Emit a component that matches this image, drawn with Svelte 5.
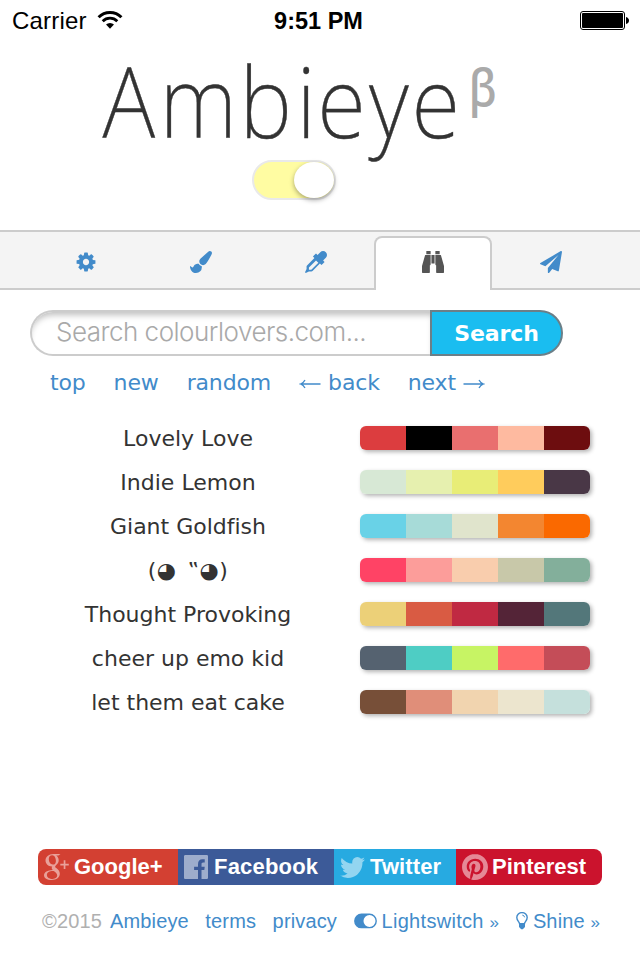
<script>
  const tabs = [
    { id: 'settings', w: 116, d: 'M1152 896q0-106-75-181t-181-75-181 75-75 181 75 181 181 75 181-75 75-181zm512-109v222q0 12-8 23t-20 13l-185 28q-19 54-39 91 35 50 107 138 10 12 10 25t-9 23q-27 37-99 108t-94 71q-12 0-26-9l-138-108q-44 23-91 38-16 136-29 186-7 28-36 28h-222q-14 0-24.5-8.5t-11.5-21.5l-28-184q-49-16-90-37l-141 107q-10 9-25 9-14 0-25-11-126-114-165-168-7-10-7-23 0-12 8-23 15-21 51-66.5t54-70.5q-27-50-41-99l-183-27q-13-2-21-12.5t-8-23.5v-222q0-12 8-23t19-13l186-28q14-46 39-92-40-57-107-138-10-12-10-24 0-10 9-23 26-36 98.5-107.5t94.5-71.5q13 0 26 10l138 107q44-23 91-38 16-136 29-186 7-28 36-28h222q14 0 24.5 8.5t11.5 21.5l28 184q49 16 90 37l142-107q9-9 24-9 13 0 25 10 129 119 165 170 7 8 7 22 0 12-8 23-15 21-51 66.5t-54 70.5q26 50 41 98l183 28q13 2 21 12.5t8 23.5z' },
    { id: 'brush', w: 113, d: 'M1615 0q70 0 122.5 46.5t52.5 116.5q0 63-45 151-332 629-465 752-97 91-218 91-126 0-216.5-92.5t-90.5-219.5q0-128 92-212l638-579q59-54 130-54zm-909 1034q39 76 106.5 130t150.5 76l1 71q4 213-129.5 347t-348.5 134q-123 0-218-46.5t-152.5-127.5-86.5-183-29-220q7 5 41 30t62 44.5 59 36.5 46 17q41 0 55-37 25-66 57.5-112.5t69.5-76 88-47.5 103-25.5 125-10.5z' },
    { id: 'picker', w: 117, d: 'M1698 94q94 94 94 226.5t-94 225.5l-225 223 104 104q10 10 10 23t-10 23l-210 210q-10 10-23 10t-23-10l-105-105-603 603q-37 37-90 37h-203l-256 128-64-64 128-256v-203q0-53 37-90l603-603-105-105q-10-10-10-23t10-23l210-210q10-10 23-10t23 10l104 104 223-225q93-94 225.5-94t226.5 94zm-1186 1442l576-576-192-192-576 576v192h192z' },
    { id: 'find', w: 118, active: true, d: 'M704 320v768q0 26-19 45t-45 19v576q0 26-19 45t-45 19h-512q-26 0-45-19t-19-45v-512l249-873q7-23 31-23h424zm320 0v704h-256v-704h256zm768 896v512q0 26-19 45t-45 19h-512q-26 0-45-19t-19-45v-576q-26 0-45-19t-19-45v-768h424q24 0 31 23zm-1088-1184v224h-352v-224q0-14 9-23t23-9h288q14 0 23 9t9 23zm736 0v224h-352v-224q0-14 9-23t23-9h288q14 0 23 9t9 23z' },
    { id: 'send', w: 118, d: 'M1764 11q33 24 27 64l-256 1536q-5 29-32 45-14 8-31 8-11 0-24-5l-453-185-242 295q-18 23-49 23-13 0-22-4-19-7-30.5-23.5t-11.5-36.5v-349l864-1059-1069 925-395-162q-37-14-40-55-2-40 32-59l1664-960q15-9 32-9 20 0 36 11z' },
  ];

  const palettes = [
    ['Lovely Love', ['#dc3d3f', '#000000', '#e96f6f', '#febaa0', '#6d0d0f']],
    ['Indie Lemon', ['#d7e8d5', '#e6f0af', '#e8ed77', '#ffcc5c', '#493746']],
    ['Giant Goldfish', ['#69d2e7', '#a7dbd8', '#e0e4cc', '#f38630', '#fa6900']],
    ['(◕ ‟◕)', ['#ff4365', '#fc9d9a', '#f9cdad', '#c8c8a9', '#83af9b']],
    ['Thought Provoking', ['#ecd078', '#d95b43', '#c02942', '#542437', '#53777a']],
    ['cheer up emo kid', ['#556270', '#4ecdc4', '#c7f464', '#ff6b6b', '#c44d58']],
    ['let them eat cake', ['#774f38', '#e08e79', '#f1d4af', '#ece5ce', '#c5e0dc']],
  ];

  // The wordmark is condensed horizontally; letter origins are given in page units.
  const squeeze = 0.92;
  const letterX = [102.5, 159.5, 239.5, 296.5, 317.3, 369, 411.5].map((x) => x / squeeze).join(' ');
</script>

<main>
  <div class="status">
    <div class="carrier">
      <span>Carrier</span>
      <svg width="26" height="20" viewBox="0 0 26 20" fill="none" stroke="#000">
        <path d="M1.6 7.2a16.1 16.1 0 0 1 22.8 0" stroke-width="3" />
        <path d="M5.7 11.2a10.4 10.4 0 0 1 14.6 0" stroke-width="2.8" />
        <path d="M9 14.6a5.7 5.7 0 0 1 8 0L13 18.8z" fill="#000" stroke="none" />
      </svg>
    </div>
    <b class="clock">9:51 PM</b>
    <svg class="battery" width="50" height="20" viewBox="0 0 50 20">
      <rect x="0.5" y="0.5" width="44" height="18" rx="2.5" fill="#fff" stroke="#000" />
      <rect x="2" y="2" width="41" height="15" rx="1" />
      <path d="M46 6q3 1 3 3.500t-3 3.500z" />
    </svg>
  </div>

  <header>
    <svg class="logo" width="420" height="110" viewBox="90 50 420 110">
      <text class="word" transform="scale({squeeze} 1)" x={letterX} y="138">Ambieye</text>
      <text class="beta" transform="scale({squeeze} 1)" x={468.5 / squeeze} y="106">β</text>
    </svg>
    <div class="switch"><i></i></div>
  </header>

  <nav>
    {#each tabs as t (t.id)}
      <a class="tab" class:active={t.active} style="width:{t.w}px">
        <svg width="22" height="22" viewBox="0 0 1792 1792"><path d={t.d} /></svg>
      </a>
    {/each}
  </nav>

  <form>
    <div class="field"><span>Search colourlovers.com...</span></div>
    <div class="go">Search</div>
  </form>

  <div class="links">
    <a>top</a><a>new</a><a>random</a>
    <a><svg width="22" height="12" viewBox="0 0 22 12"><path d="M21.500 6H1.500M6 2Q4.500 5 1.500 6 4.500 7 6 10" /></svg>back</a>
    <a>next<svg width="22" height="12" viewBox="0 0 22 12"><path d="M.5 6h20M16 2Q17.500 5 20.500 6 17.500 7 16 10" /></svg></a>
  </div>

  <section>
    {#each palettes as [name, colors], n}
      <div class="row">
        <span class="name" class:face={n === 3}>{name}</span>
        <div class="swatches">
          {#each colors as c}<i style="background:{c}"></i>{/each}
        </div>
      </div>
    {/each}
  </section>

  <div class="social">
    <a class="gp">
      <svg width="28" height="30" viewBox="0 0 28 30">
        <path fill-rule="evenodd" d="M17.500 2h-7C5.500 2 2.500 5 2.500 8.600c0 3.600 3 6 6.700 5.800-.9 1.500-.4 2.500.6 3.500C4.500 18 1 20 1 23.200 1 26 4 28 8.500 28c5.200 0 8.300-2.800 8.300-6.200 0-2.600-1.500-4.200-3.500-5.700-1.500-1.200-1.600-1.900-.1-3.200 1.500-1.300 2.500-2.600 2.500-4.700 0-2.300-1.100-3.800-2.500-4.800h2.200zM9.200 3.200c2.400 0 3.700 3.100 3.700 5.700 0 2.200-1.100 3.700-3 3.700-2.600 0-4.100-2.900-4.100-5.500 0-2.200 1.200-3.900 3.400-3.900zm1.400 15.900c2.400 1.600 3.600 2.600 3.600 4.500 0 1.900-1.600 3.300-4.500 3.300-3.400 0-5.800-1.600-5.800-4 0-2.600 3-4 6.700-3.800z" />
        <path d="M20.700 8.200h1.700v3.500h3.400v1.700h-3.400v3.500h-1.700v-3.500h-3.400v-1.700h3.400z" />
      </svg><span>Google+</span>
    </a>
    <a class="fb">
      <svg width="24" height="24" viewBox="0 0 24 24"><path d="M22.676 0H1.324C.593 0 0 .593 0 1.324v21.352C0 23.408.593 24 1.324 24h12.694v-8.900H10.100v-3.300h3.918V9.200c0-3.100 1.700-4.900 4.300-4.900h2.400v3.300h-1.500c-1.400 0-1.700.7-1.700 1.800v2.400h3.200l-.4 3.300h-2.800V24h5.158c.733 0 1.325-.592 1.325-1.324V1.324C24 .593 23.408 0 22.676 0" /></svg><span>Facebook</span>
    </a>
    <a class="tw">
      <svg width="25" height="21" viewBox="108 256 1576 1280" preserveAspectRatio="none"><path d="M1684 408q-67 98-162 167 1 14 1 42 0 130-38 259.500t-115.500 248.500-184.500 210.500-258 146-323 54.500q-271 0-496-145 35 4 78 4 225 0 401-138-105-2-188-64.500t-114-159.500q33 5 61 5 43 0 85-11-112-23-185.500-111.500t-73.500-205.500v-4q68 38 146 41-66-44-105-115t-39-154q0-88 44-163 121 149 294.500 238.500t371.500 99.500q-8-38-8-74 0-134 94.500-228.500t228.500-94.500q140 0 236 102 109-21 205-78-37 115-142 178 93-10 186-50z" /></svg><span>Twitter</span>
    </a>
    <a class="pi">
      <svg width="26" height="26" viewBox="0 0 24 24"><path d="M12.017 0C5.396 0 .029 5.367.029 11.987c0 5.079 3.158 9.417 7.618 11.162-.105-.949-.199-2.403.041-3.439.219-.937 1.406-5.957 1.406-5.957s-.359-.72-.359-1.781c0-1.663.967-2.911 2.168-2.911 1.024 0 1.518.769 1.518 1.688 0 1.029-.653 2.567-.992 3.992-.285 1.193.6 2.165 1.775 2.165 2.128 0 3.768-2.245 3.768-5.487 0-2.861-2.063-4.869-5.008-4.869-3.410 0-5.409 2.562-5.409 5.199 0 1.033.394 2.143.889 2.741.099.12.112.225.085.345-.09.375-.293 1.199-.334 1.363-.053.225-.172.271-.401.165-1.495-.69-2.433-2.878-2.433-4.646 0-3.776 2.748-7.252 7.920-7.252 4.158 0 7.392 2.967 7.392 6.923 0 4.135-2.607 7.462-6.233 7.462-1.214 0-2.354-.629-2.758-1.379l-.749 2.848c-.269 1.045-1.004 2.352-1.498 3.146 1.123.345 2.306.535 3.550.535 6.607 0 11.985-5.365 11.985-11.987C23.970 5.390 18.592.026 11.985.026L12.017 0z" /></svg><span>Pinterest</span>
    </a>
  </div>

  <footer>
    <span class="copy">©2015</span>
    <a>Ambieye</a><a>terms</a><a>privacy</a>
    <a class="light"><svg width="23" height="16" viewBox="0 0 23 16"><path fill-rule="evenodd" d="M7.500.5h8a7.400 7.400 0 0 1 0 14.800h-8a7.400 7.400 0 0 1 0-14.800zm8 1.400a6 6 0 1 0 0 12 6 6 0 0 0 0-12z" /></svg><span>Lightswitch <small>»</small></span></a>
    <a class="shine"><svg width="12" height="18" viewBox="0 0 12 18"><path d="M3.600 11.800C3.300 9.500.8 8.800.8 5.600a5.200 5 0 0 1 10.400 0c0 3.200-2.500 3.900-2.800 6.200z" fill="none" stroke="#428bca" stroke-width="1.400" /><path d="M3 11.500h6v3.600L7.500 16.400Q6 18.200 4.500 16.400L3 15.100z" /><path d="M6.300 3.100q2 .2 2.300 2.200" fill="none" stroke="#428bca" /></svg><span>Shine <small>»</small></span></a>
  </footer>
</main>

<style>
  :global(body) { background: #fff; }
  main { width: 640px; height: 960px; overflow: hidden; background: #fff; color: #333; font-family: "Liberation Sans", Arial, sans-serif; display: flex; flex-direction: column; }
  svg { display: block; flex: none; }
  a { color: #428bca; text-decoration: none; white-space: nowrap; }
  svg path { fill: currentColor; }
  svg path[fill="none"] { fill: none; }

  .status { height: 40px; flex: none; box-sizing: border-box; display: grid; grid-template-columns: 1fr auto 1fr; align-items: center; padding: 2px 10px 0 12px; color: #000; }
  .carrier { display: flex; align-items: center; gap: 10px; font-size: 24px; letter-spacing: .2px; }
  .carrier svg { margin-top: -2px; }
  .carrier svg path[stroke-width] { fill: none; }
  .clock { font-size: 23.500px; margin-right: 5px; }
  .battery { justify-self: end; }

  header { height: 190px; flex: none; display: flex; flex-direction: column; align-items: flex-start; padding: 10px 0 0 90px; box-sizing: border-box; }
  .logo { overflow: visible; }
  .word { font: 200 97px "Noto Sans", "Open Sans", sans-serif; fill: #333; stroke: #333; stroke-width: .4px; }
  .beta { font: 500 50px "Noto Sans", sans-serif; fill: #aaa; }
  .switch { width: 84px; height: 40px; margin-left: 162px; box-sizing: border-box; border: 2px solid #e9e9e9; border-radius: 20px; background: #fffca2; display: flex; justify-content: flex-end; }
  .switch i { width: 40px; height: 36px; border-radius: 50%; background: #fff; box-shadow: 0 2px 5px rgba(0,0,0,.35); }

  nav { height: 60px; flex: none; box-sizing: border-box; border-top: 2px solid #ccc; box-shadow: inset 0 -2px #ccc; background: #f4f4f4; display: flex; align-items: flex-end; padding-left: 28px; }
  .tab { height: 54px; box-sizing: border-box; display: flex; justify-content: center; align-items: center; }
  .tab.active { background: #fff; color: #555; border: 2px solid #ccc; border-bottom: 0; border-radius: 8px 8px 0 0; }
  .tab:not(.active) { border-top: 2px solid transparent; }
  .tab svg { margin-bottom: 4px; }

  form { display: flex; margin: 20px 0 0 30px; height: 46px; flex: none; }
  .field { width: 400px; box-sizing: border-box; border: 2px solid #ccc; border-right: 0; border-radius: 23px 0 0 23px; box-shadow: inset 0 6px 6px -3px rgba(0,0,0,.25); padding: 0 0 4px 24px; display: flex; align-items: center; color: #a9a9a9; font: 300 26px Inter, sans-serif; letter-spacing: -.5px; white-space: nowrap; }
  .go { width: 133px; box-sizing: border-box; border: 2px solid #6b7f88; border-radius: 0 23px 23px 0; background: #1abdf0; color: #fff; font: bold 22px "DejaVu Sans", Verdana, sans-serif; letter-spacing: -.1px; display: flex; align-items: center; justify-content: center; }

  .links { height: 52px; flex: none; display: flex; align-items: center; gap: 28px; padding-left: 50px; font: 22px "DejaVu Sans", Verdana, sans-serif; letter-spacing: -.15px; }
  .links a { display: flex; align-items: center; gap: 7px; }
  .links svg { margin-top: 4px; }
  .links svg path { fill: none; stroke: #428bca; stroke-width: 1.300; }

  section { display: flex; flex-direction: column; padding: 8px 0 0 20px; }
  .row { height: 44px; display: flex; align-items: center; }
  .name { width: 336px; margin-right: 4px; text-align: center; font: 22px "DejaVu Sans", Verdana, sans-serif; white-space: nowrap; font-variant-ligatures: none; }
  .face { letter-spacing: .4px; word-spacing: 4px; }
  .swatches { width: 230px; height: 24px; display: flex; overflow: hidden; border-radius: 6px; box-shadow: 2px 2px 4px rgba(0,0,0,.3); }
  .swatches i { flex: 1; }

  .social { margin: 125px 0 0 38px; width: 564px; height: 36px; flex: none; display: flex; border-radius: 8px; overflow: hidden; }
  .social a { display: flex; align-items: center; color: rgba(255,255,255,.5); box-sizing: border-box; padding-left: 6px; }
  .social span { color: #fff; font-weight: bold; font-size: 22px; }
  .social .gp { background: #d34032; width: 140px; padding-left: 5px; gap: 3px; }
  .fb { background: #3c5a98; width: 156px; gap: 6px; }
  .fb span { letter-spacing: .2px; }
  .tw { background: #27aae1; width: 122px; gap: 5px; }
  .tw span { letter-spacing: .1px; }
  .pi { background: #cb132d; width: 146px; gap: 4px; }

  footer { height: 24px; flex: none; margin: 24px 0 0 42px; display: flex; align-items: center; font-size: 20px; letter-spacing: .15px; white-space: nowrap; }
  footer a { display: flex; align-items: center; margin-right: 16.500px; }
  .copy { color: #b0b0b0; margin-right: 8px; }
  footer small { font-size: 17px; }
  .light, .shine { gap: 5px; }
  .light span { letter-spacing: .3px; }
</style>
